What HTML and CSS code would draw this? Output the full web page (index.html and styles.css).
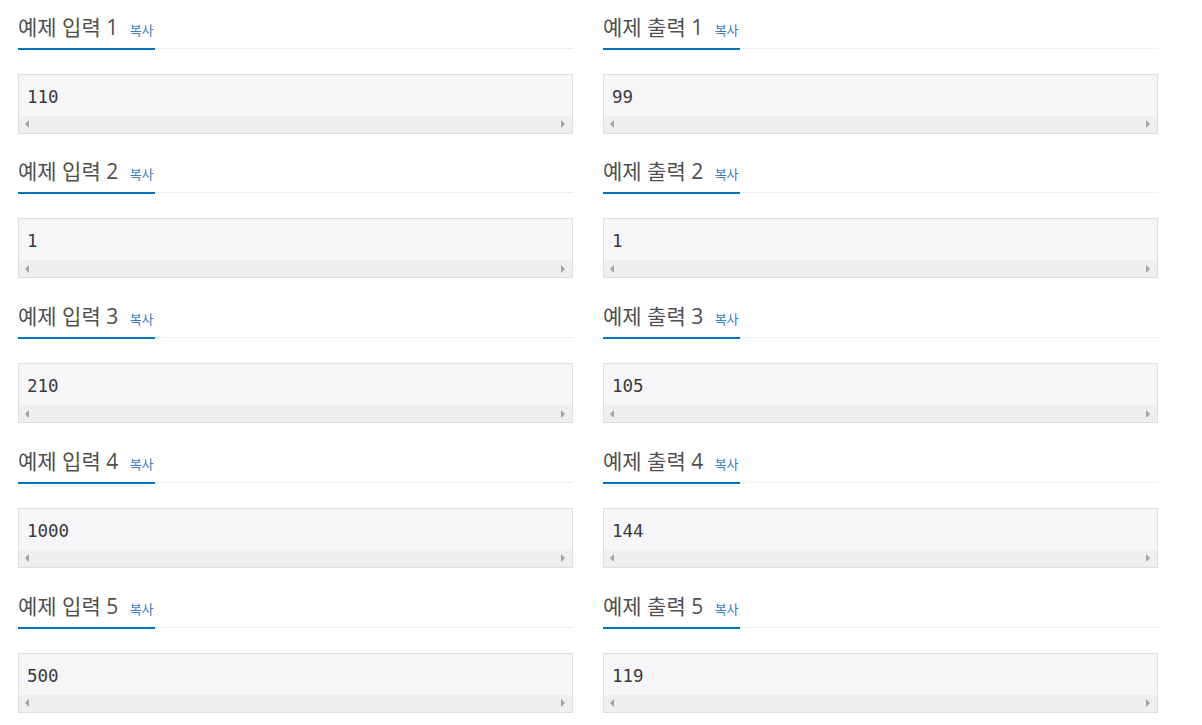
FILE: index.html
```html
<!DOCTYPE html>
<html lang="ko">
<head>
<meta charset="utf-8">
<title>예제</title>
<link rel="stylesheet" href="styles.css">
</head>
<body>
<div class="samples">
  <section class="sample">
    <div class="headline"><h2 class="title">예제 입력 1 <span class="copy">복사</span></h2><div class="fill"></div></div>
    <div class="data"><pre class="text">110</pre><div class="scroll"><span class="arr left"></span><span class="arr right"></span></div></div>
  </section>
  <section class="sample">
    <div class="headline"><h2 class="title">예제 출력 1 <span class="copy">복사</span></h2><div class="fill"></div></div>
    <div class="data"><pre class="text">99</pre><div class="scroll"><span class="arr left"></span><span class="arr right"></span></div></div>
  </section>
  <section class="sample">
    <div class="headline"><h2 class="title">예제 입력 2 <span class="copy">복사</span></h2><div class="fill"></div></div>
    <div class="data"><pre class="text">1</pre><div class="scroll"><span class="arr left"></span><span class="arr right"></span></div></div>
  </section>
  <section class="sample">
    <div class="headline"><h2 class="title">예제 출력 2 <span class="copy">복사</span></h2><div class="fill"></div></div>
    <div class="data"><pre class="text">1</pre><div class="scroll"><span class="arr left"></span><span class="arr right"></span></div></div>
  </section>
  <section class="sample">
    <div class="headline"><h2 class="title">예제 입력 3 <span class="copy">복사</span></h2><div class="fill"></div></div>
    <div class="data"><pre class="text">210</pre><div class="scroll"><span class="arr left"></span><span class="arr right"></span></div></div>
  </section>
  <section class="sample">
    <div class="headline"><h2 class="title">예제 출력 3 <span class="copy">복사</span></h2><div class="fill"></div></div>
    <div class="data"><pre class="text">105</pre><div class="scroll"><span class="arr left"></span><span class="arr right"></span></div></div>
  </section>
  <section class="sample">
    <div class="headline"><h2 class="title">예제 입력 4 <span class="copy">복사</span></h2><div class="fill"></div></div>
    <div class="data"><pre class="text">1000</pre><div class="scroll"><span class="arr left"></span><span class="arr right"></span></div></div>
  </section>
  <section class="sample">
    <div class="headline"><h2 class="title">예제 출력 4 <span class="copy">복사</span></h2><div class="fill"></div></div>
    <div class="data"><pre class="text">144</pre><div class="scroll"><span class="arr left"></span><span class="arr right"></span></div></div>
  </section>
  <section class="sample">
    <div class="headline"><h2 class="title">예제 입력 5 <span class="copy">복사</span></h2><div class="fill"></div></div>
    <div class="data"><pre class="text">500</pre><div class="scroll"><span class="arr left"></span><span class="arr right"></span></div></div>
  </section>
  <section class="sample">
    <div class="headline"><h2 class="title">예제 출력 5 <span class="copy">복사</span></h2><div class="fill"></div></div>
    <div class="data"><pre class="text">119</pre><div class="scroll"><span class="arr left"></span><span class="arr right"></span></div></div>
  </section>
</div>
</body>
</html>
```

FILE: styles.css
```css
html, body {
  margin: 0;
  padding: 0;
  background: #fff;
}

body {
  font-family: "Open Sans", "Noto Sans CJK KR", sans-serif;
  color: #555;
}

.samples {
  display: grid;
  grid-template-columns: 555px 555px;
  column-gap: 30px;
  padding-left: 18px;
}

.sample {
  padding-top: 13.6px;
  margin-bottom: 11.2px;
}

.headline {
  display: flex;
  align-items: flex-end;
}

.title {
  margin: 0;
  height: 26px;
  font-size: 21px;
  font-weight: 400;
  line-height: 26px;
  color: #4f4f4f;
  padding-bottom: 8px;
  padding-right: 1px;
  border-bottom: 2px solid #0076c0;
  white-space: nowrap;
}

.copy {
  font-size: 13px;
  line-height: 1;
  padding-left: 6px;
  color: #3a7cc4;
  font-family: "Noto Sans CJK KR", sans-serif;
}

.fill {
  flex: 1;
  margin-bottom: 1px;
  border-bottom: 1px dotted #d9dee8;
}

.data {
  margin-top: 24px;
  border: 1px solid #dddde2;
  background: #f6f6f8;
}

.text {
  margin: 0;
  padding: 12px 8px 9px;
  font-family: "DejaVu Sans Mono", monospace;
  font-size: 17.5px;
  line-height: 20px;
  color: #3a3a3a;
}

.scroll {
  height: 17px;
  background: #efefef;
  display: flex;
  justify-content: space-between;
  align-items: center;
  padding: 0 7px 0 6px;
}

.arr {
  width: 0;
  height: 0;
  border-top: 4px solid transparent;
  border-bottom: 4px solid transparent;
}

.arr.left {
  border-right: 4px solid #a3a3a3;
}

.arr.right {
  border-left: 4px solid #a3a3a3;
}
```
